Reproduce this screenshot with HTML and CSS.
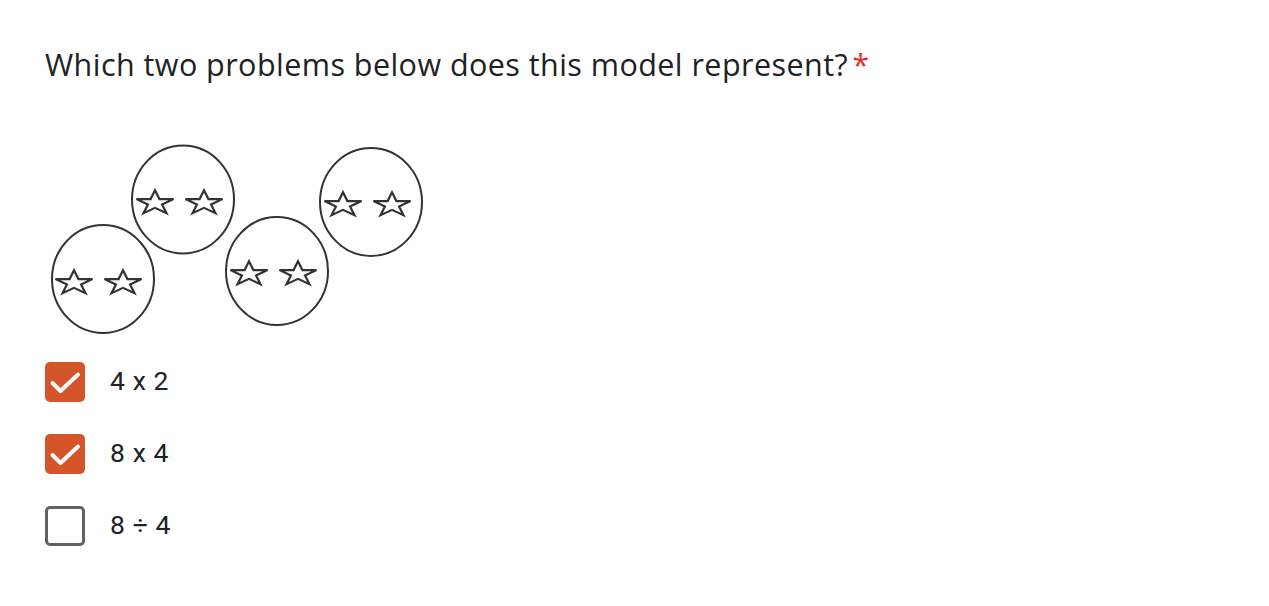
FILE: index.html
```html
<!DOCTYPE html>
<html>
<head>
<meta charset="utf-8">
<link rel="stylesheet" href="styles.css">
</head>
<body>
<div class="question">
  <div class="title">Which two problems below does this model represent?<span class="req">*</span></div>
  <svg class="model" width="400" height="200" viewBox="45 140 400 200" xmlns="http://www.w3.org/2000/svg">
    <defs>
      <path id="star" d="M0,-12.7 L4.38,-3.92 L18.54,-3.92 L7.08,1.5 L11.47,10.27 L0,4.85 L-11.47,10.27 L-7.08,1.5 L-18.54,-3.92 L-4.38,-3.92 Z" fill="#fff" stroke="#333" stroke-width="2.2" stroke-linejoin="miter"/>
    </defs>
    <g fill="none" stroke="#333" stroke-width="2">
      <ellipse cx="103" cy="279" rx="51" ry="54"/>
      <ellipse cx="183" cy="199.5" rx="51" ry="54"/>
      <ellipse cx="277" cy="271" rx="51" ry="54"/>
      <ellipse cx="371" cy="202" rx="51" ry="54"/>
    </g>
    <use href="#star" x="74" y="283"/>
    <use href="#star" x="123" y="283"/>
    <use href="#star" x="155" y="203"/>
    <use href="#star" x="204" y="203"/>
    <use href="#star" x="249" y="274"/>
    <use href="#star" x="298" y="274"/>
    <use href="#star" x="343" y="205"/>
    <use href="#star" x="392" y="205"/>
  </svg>
  <div class="options">
    <div class="option">
      <span class="box checked"><svg width="40" height="40" viewBox="0 0 40 40"><path d="M7.5 21 L15.5 29 L33 12.5" fill="none" stroke="#fff" stroke-width="4" stroke-linecap="round" stroke-linejoin="round"/></svg></span>
      <span class="label">4 x 2</span>
    </div>
    <div class="option">
      <span class="box checked"><svg width="40" height="40" viewBox="0 0 40 40"><path d="M7.5 21 L15.5 29 L33 12.5" fill="none" stroke="#fff" stroke-width="4" stroke-linecap="round" stroke-linejoin="round"/></svg></span>
      <span class="label">8 x 4</span>
    </div>
    <div class="option">
      <span class="box"></span>
      <span class="label">8 ÷ 4</span>
    </div>
  </div>
</div>
</body>
</html>
```
FILE: styles.css
```css
html, body {
  margin: 0;
  padding: 0;
  background: #fff;
}
.question {
  padding: 44px 0 0 45px;
}
.title {
  font-family: "Open Sans", "Liberation Sans", sans-serif;
  font-size: 30.5px;
  line-height: 40px;
  color: #202124;
  letter-spacing: 0.45px;
}
.req {
  color: #d93025;
  margin-left: 4px;
}
.model {
  display: block;
  margin-top: 56px;
}
.options {
  display: flex;
  flex-direction: column;
  gap: 32px;
  margin-top: 22px;
}
.option {
  display: flex;
  align-items: center;
  height: 40px;
}
.box {
  box-sizing: border-box;
  width: 40px;
  height: 40px;
  border-radius: 5px;
  border: 3px solid #5f6368;
  flex: none;
  display: block;
}
.box.checked {
  background: #d4552a;
  border: none;
}
.box svg {
  display: block;
}
.label {
  margin-left: 25px;
  padding-bottom: 3px;
  font-family: Roboto, "Liberation Sans", sans-serif;
  font-size: 26.5px;
  line-height: 38px;
  color: #202124;
  letter-spacing: 0.6px;
}
```
